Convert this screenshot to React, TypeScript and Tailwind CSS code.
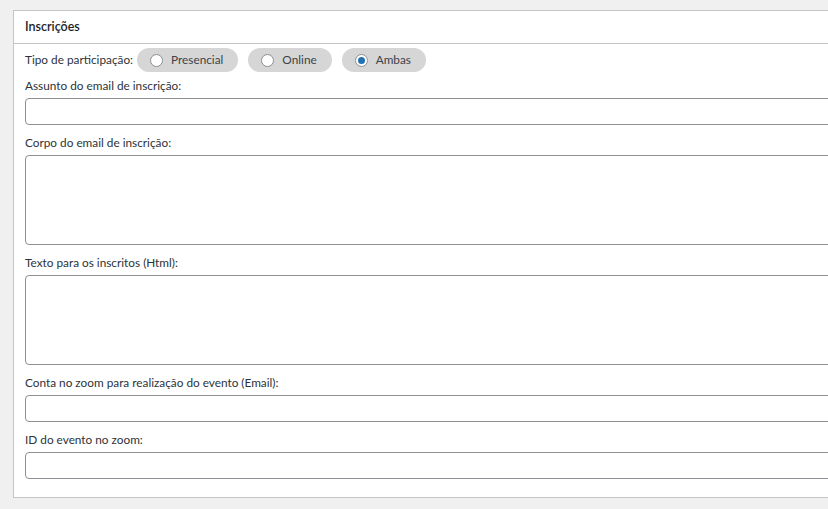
type Option = { label: string; checked?: boolean };

const options: Option[] = [
  { label: "Presencial" },
  { label: "Online" },
  { label: "Ambas", checked: true },
];

function Radio({ label, checked }: Option) {
  return (
    <label className="flex h-[24px] items-center gap-[8px] rounded-full bg-[#d6d6d6] pl-[13px] pr-[15px] text-[#3c434a]">
      <span className="flex h-[13px] w-[13px] items-center justify-center rounded-full border border-[#8c8f94] bg-white">
        {checked && <span className="h-[7px] w-[7px] rounded-full bg-[#2271b1]" />}
      </span>
      <span>{label}</span>
    </label>
  );
}

function Field({ label, tall, first }: { label: string; tall?: boolean; first?: boolean }) {
  return (
    <div className={first ? "mt-[5px]" : "mt-[9px]"}>
      <div className="h-[18px] leading-[18px] text-[#2c3338]">{label}</div>
      {tall ? (
        <textarea className="mt-[3px] block h-[90px] w-full resize-none rounded-[4px] border border-[#8c8f94] bg-white" />
      ) : (
        <input className="mt-[3px] block h-[27px] w-full rounded-[4px] border border-[#8c8f94] bg-white" />
      )}
    </div>
  );
}

export default function App() {
  return (
    <div className="h-[509px] w-[828px] overflow-hidden bg-[#f0f0f1] pl-[13px] pt-[10px] font-['Lato',sans-serif] text-[11.8px]">
      <div className="w-[860px] border border-[#c3c4c7] bg-white">
        <div className="flex h-[33px] items-center border-b border-[#c3c4c7] px-[11px] pt-[1px] text-[12.5px] font-semibold text-[#1d2327]">
          Inscrições
        </div>
        <div className="w-[845px] pb-[18px] pl-[11px]">
          <div className="mt-[4px] flex items-center">
            <span className="mr-[4px] text-[#2c3338]">Tipo de participação:</span>
            <div className="flex gap-[10px]">
              {options.map((o) => (
                <Radio key={o.label} {...o} />
              ))}
            </div>
          </div>
          <Field first label="Assunto do email de inscrição:" />
          <Field tall label="Corpo do email de inscrição:" />
          <Field tall label="Texto para os inscritos (Html):" />
          <Field label="Conta no zoom para realização do evento (Email):" />
          <Field label="ID do evento no zoom:" />
        </div>
      </div>
    </div>
  );
}
